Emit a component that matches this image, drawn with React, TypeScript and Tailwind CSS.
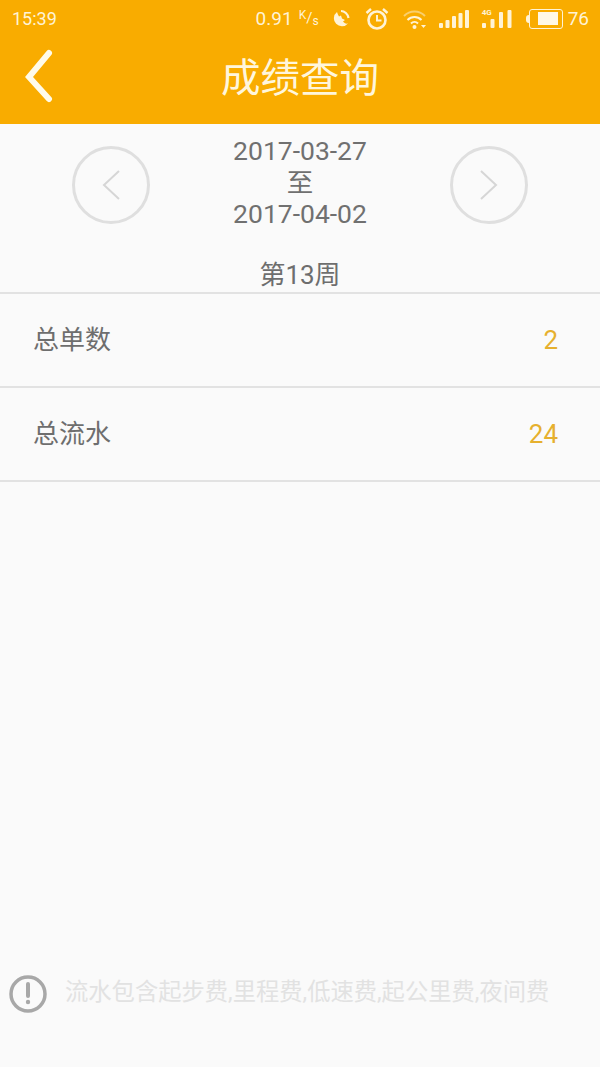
const font = { fontFamily: 'Roboto, "Noto Sans CJK SC", sans-serif' };

function CircleArrow({ dir }: { dir: "left" | "right" }) {
  return (
    <div className="flex h-[78px] w-[78px] shrink-0 items-center justify-center rounded-full border-[3px] border-[#dfdfdf]">
      <svg width="20" height="32" viewBox="0 0 20 32" fill="none" stroke="#d6d6d6" strokeWidth="2">
        {dir === "left" ? <path d="M18 2 3 16l15 14" /> : <path d="M2 2l15 14L2 30" />}
      </svg>
    </div>
  );
}

function StatRow({ label, value }: { label: string; value: string }) {
  return (
    <div className="flex h-[94px] items-center justify-between border-b-2 border-[#e2e2e2] pl-[33px] pr-[42px] pt-[2px]">
      <span className="text-[26px] text-[#6e6e6e]">{label}</span>
      <span className="text-[26px] text-[#e6b02e]">{value}</span>
    </div>
  );
}

function StatusIcons() {
  return (
    <div className="flex items-center">
      {/* moon */}
      <svg width="20" height="20" viewBox="0 0 20 20" className="ml-[12px]" fill="none">
        <path d="M6 3a8 8 0 1 0 11 11.500c-2 .5-4-.5-5-2l2-1.500-3-1.500-1-3L8 7.500C7 6 6.500 4.500 6 3z" fill="#fff3d6" />
        <path d="M10 2c3.500 0 7 3 7.500 7" stroke="#fff3d6" strokeWidth="2.200" />
      </svg>
      {/* alarm */}
      <svg width="26" height="24" viewBox="0 0 26 24" fill="none" stroke="#fff3d6" className="ml-[13px]">
        <circle cx="13" cy="13" r="8.500" strokeWidth="2.600" />
        <path d="M13 8v5.500h4.500" strokeWidth="2" />
        <path d="M2.500 6 7 2M23.500 6 19 2" strokeWidth="2.400" />
      </svg>
      {/* wifi */}
      <svg width="24" height="22" viewBox="0 0 24 22" fill="none" className="ml-[13px]">
        <path d="M1 8c6-6 15-6 21 0" stroke="#f9cf6d" strokeWidth="2" />
        <path d="M4.500 12c4-4 10-4 14 0" stroke="#fff3d6" strokeWidth="2" />
        <path d="M8 15.500c2-2 5-2 7 0" stroke="#fff3d6" strokeWidth="2" />
        <circle cx="11.500" cy="19" r="2" fill="#fff3d6" />
        <path d="M18 17h5l-2.500 3z" fill="#fff3d6" />
      </svg>
      {/* signal */}
      <svg width="30" height="20" viewBox="0 0 30 20" fill="#fff3d6" className="ml-[12px]">
        <rect x="0" y="14" width="4" height="5" rx="1" />
        <rect x="6.500" y="11" width="4" height="8" rx="1" />
        <rect x="13" y="7" width="4" height="12" rx="1" />
        <rect x="19.500" y="4" width="4" height="15" rx="1" />
        <rect x="26" y="1" width="4" height="18" rx="1" />
      </svg>
      {/* 4g signal */}
      <div className="relative ml-[13px] h-[20px] w-[30px]">
        <svg width="30" height="20" viewBox="0 0 30 20" fill="#fff3d6">
          <rect x="0" y="14" width="4" height="5" rx="1" />
          <rect x="8.500" y="10" width="4" height="9" rx="1" />
          <rect x="17" y="3" width="4" height="16" rx="1" />
          <rect x="25.500" y="1" width="4" height="18" rx="1" />
        </svg>
        <span className="absolute left-0 top-[-1px] text-[8px] font-bold leading-[10px] text-[#fff3d6]">4G</span>
      </div>
      {/* battery */}
      <div className="ml-[14px] flex items-center">
        <div className="h-[8px] w-[3px] rounded-l-sm bg-[#fff3d6]" />
        <div className="flex h-[20px] w-[34px] items-center rounded-[3px] border-[1.500px] border-[#fff3d6] pl-[8px]">
          <div className="h-[13px] w-[20px] bg-[#fff8e6]" />
        </div>
      </div>
      <span className="ml-[5px] text-[19px] leading-none text-[#fff3d6]">76</span>
    </div>
  );
}

export default function App() {
  return (
    <div className="flex h-[1067px] w-[600px] flex-col overflow-hidden bg-[#fafafa]" style={font}>
      <div className="h-[124px] shrink-0 bg-[#f9ac00]">
        <div className="flex h-[37px] items-center justify-between pl-[12px] pr-[11px]">
          <span className="text-[18px] leading-none text-[#fff3d6]">15:39</span>
          <div className="flex items-center">
            <span className="text-[19px] leading-none text-[#fff3d6]">0.91</span>
            <span className="ml-[6px] flex w-[20px] items-center text-[12px] leading-none text-[#fff3d6]">
              <span className="-mt-[7px]">K</span>
              <span className="text-[15px]">/</span>
              <span className="mt-[5px]">s</span>
            </span>
            <StatusIcons />
          </div>
        </div>
        <div className="relative flex h-[81px] items-center justify-center pt-[2px]">
          <svg width="30" height="56" viewBox="0 0 30 56" fill="none" stroke="#fffbe9" strokeWidth="6" strokeLinecap="round" className="absolute left-[24px] top-[12px]">
            <path d="M25 4 5 28l20 22" />
          </svg>
          <span className="text-[39.500px] leading-none text-[#fff6dc]">成绩查询</span>
        </div>
      </div>

      <div className="flex items-start justify-between pl-[72px] pr-[72px] pt-[22px]">
        <CircleArrow dir="left" />
        <div className="flex flex-col items-center text-[26.500px] leading-[31.500px] text-[#707070]">
          <span className="-mt-[11px]">2017-03-27</span>
          <span>至</span>
          <span>2017-04-02</span>
        </div>
        <CircleArrow dir="right" />
      </div>

      <div className="mt-[29px] text-center text-[26px] leading-[32px] text-[#6e6e6e]">第13周</div>

      <div className="mt-[1px] border-t-2 border-[#e2e2e2]">
        <StatRow label="总单数" value="2" />
        <StatRow label="总流水" value="24" />
      </div>

      <div className="mt-auto mb-[54px] flex items-center pl-[9px]">
        <svg width="38" height="38" viewBox="0 0 38 38" fill="none">
          <circle cx="19" cy="19" r="17" stroke="#a8a8a8" strokeWidth="3.500" />
          <path d="M19 9v12" stroke="#a8a8a8" strokeWidth="4" strokeLinecap="round" />
          <circle cx="19" cy="27" r="2.200" fill="#a8a8a8" />
        </svg>
        <span className="ml-[18px] -mt-[2px] text-[23.300px] leading-none text-[#e2e2e2]">流水包含起步费,里程费,低速费,起公里费,夜间费</span>
      </div>
    </div>
  );
}
